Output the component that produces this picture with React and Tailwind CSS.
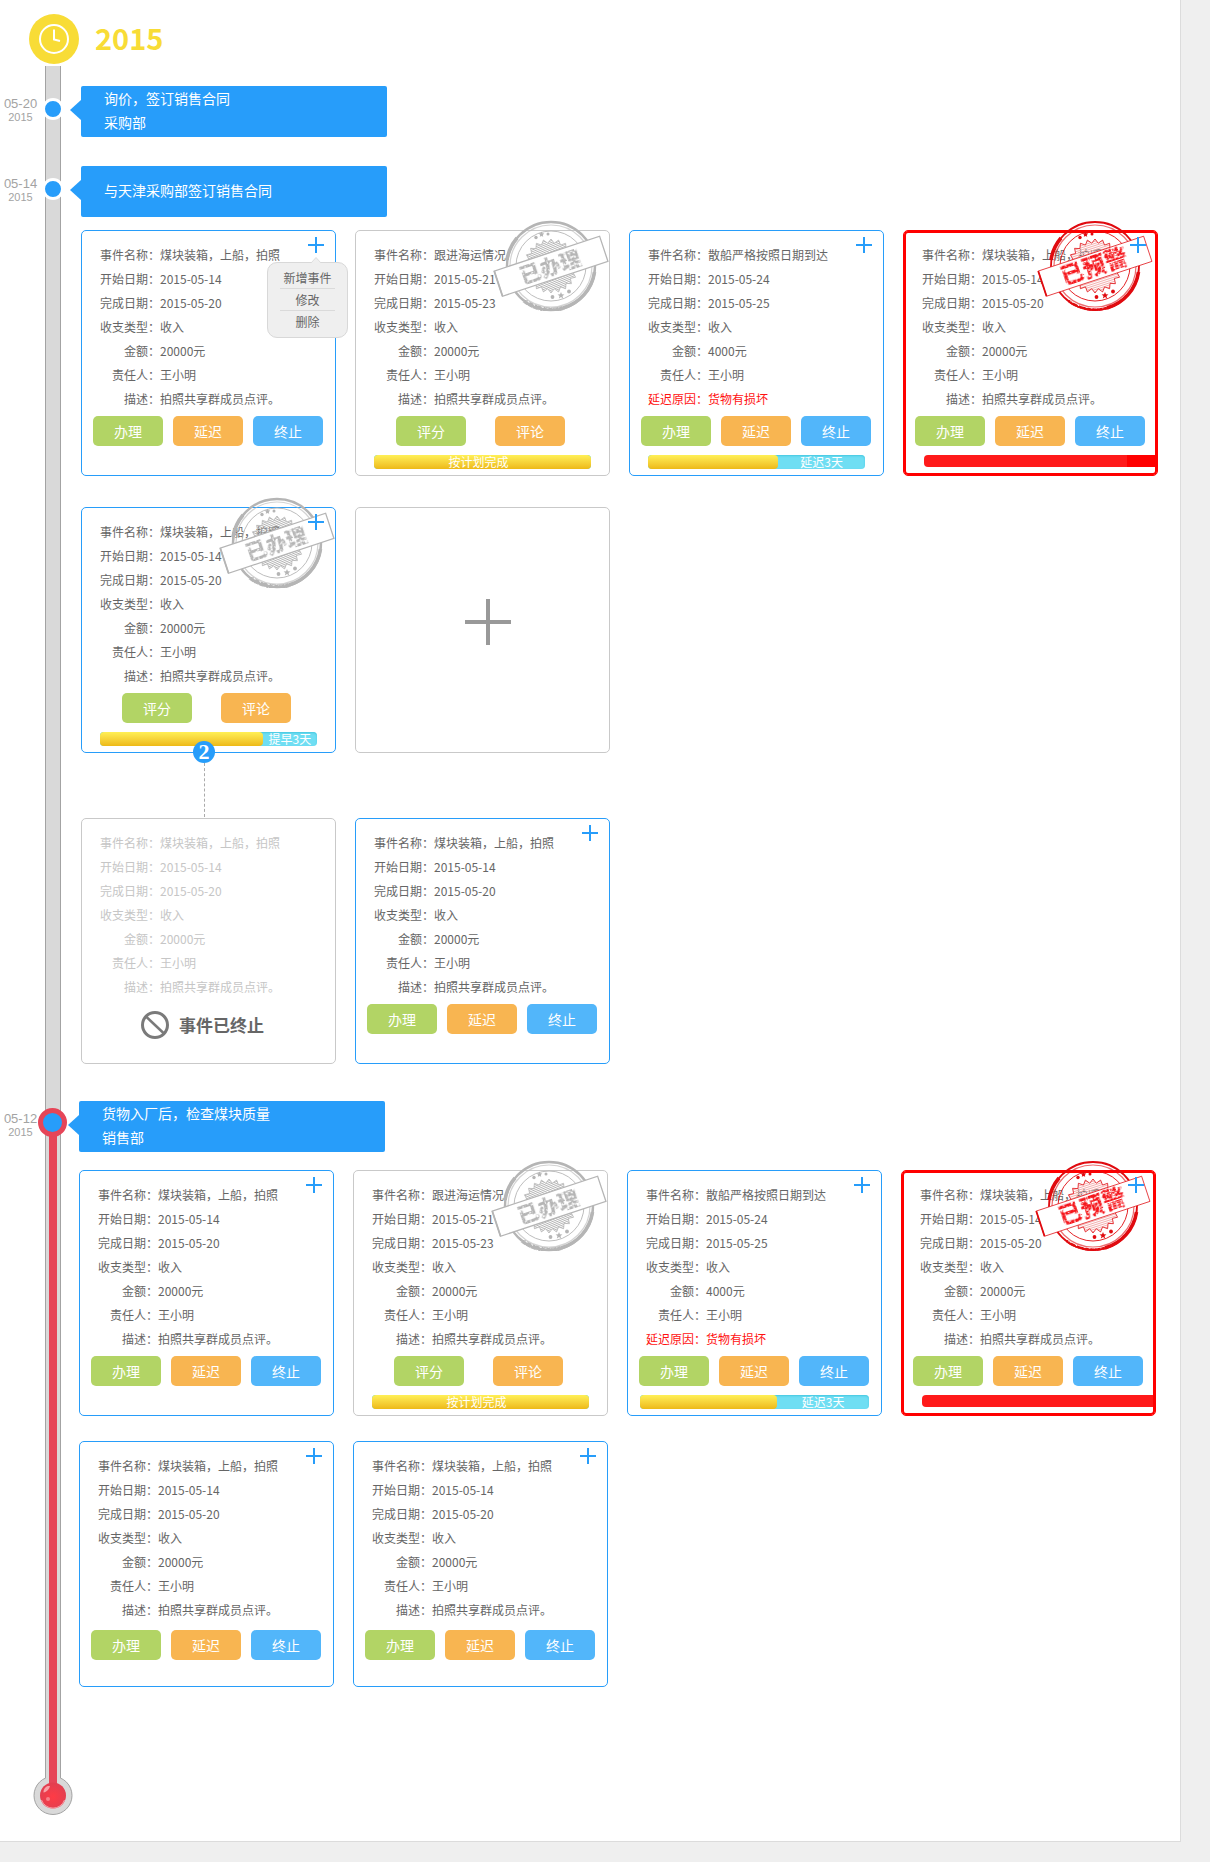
import React from "react";

const BASE = {
  name: "煤块装箱，上船，拍照",
  start: "2015-05-14",
  end: "2015-05-20",
  type: "收入",
  amount: "20000元",
  owner: "王小明",
  desc: "拍照共享群成员点评。",
};
const SEA = { ...BASE, name: "跟进海运情况", start: "2015-05-21", end: "2015-05-23" };
const BULK = {
  ...BASE,
  name: "散船严格按照日期到达",
  start: "2015-05-24",
  end: "2015-05-25",
  amount: "4000元",
  delay: "货物有损坏",
};

function starPoints(cx, cy, outer, inner, count) {
  const pts = [];
  for (let i = 0; i < count * 2; i++) {
    const r = i % 2 ? inner : outer;
    const a = (Math.PI * i) / count - Math.PI / 2;
    pts.push(`${(cx + r * Math.cos(a)).toFixed(2)},${(cy + r * Math.sin(a)).toFixed(2)}`);
  }
  return pts.join(" ");
}

function SharedDefs() {
  return (
    <svg className="absolute h-0 w-0" aria-hidden="true">
      <defs>
        <filter id="worn" x="-5%" y="-5%" width="110%" height="110%">
          <feTurbulence type="fractalNoise" baseFrequency="0.4" numOctaves="2" seed="4" result="noise" />
          <feColorMatrix in="noise" type="matrix" values="0 0 0 0 0  0 0 0 0 0  0 0 0 0 0  0 0 0 -5 3.6" result="mask" />
          <feComposite in="SourceGraphic" in2="mask" operator="in" />
        </filter>
        <pattern id="hatch-gray" width="2" height="2" patternUnits="userSpaceOnUse" patternTransform="rotate(25)">
          <rect width="2" height="1" fill="#b4b4b4" />
        </pattern>
        <pattern id="hatch-red" width="2" height="2" patternUnits="userSpaceOnUse" patternTransform="rotate(-18)">
          <rect width="2" height="1" fill="#f3b0b0" />
        </pattern>
      </defs>
    </svg>
  );
}

function Stamp({ text, red }) {
  const ink = red ? "#e00a0f" : "#b5b5b5";
  return (
    <svg
      className={`pointer-events-none absolute -top-3 h-[94px] w-[116px] ${red ? "right-1" : "right-0"}`}
      viewBox="-58 -47 116 94"
      role="img"
      aria-label={text}
    >
      <g fill="none" stroke={ink}>
        <circle r="44" strokeWidth={red ? 1.8 : 2.4} />
        <circle r="41" strokeWidth="1.2" opacity="0.6" />
        <circle r="35" strokeWidth="0.9" />
        <path d="M-44 -6 A44 44 0 0 1 -34 -28" strokeWidth="3.6" />
        <path d="M43.500 6 A44 44 0 0 1 12 42" strokeWidth="3.6" />
        <path d="M12 42 A44 44 0 0 1 -27 34.500" strokeWidth={red ? 2.6 : 4.4} filter="url(#worn)" />
      </g>
      <polygon
        points={starPoints(0, 0, 27, 23, 22)}
        fill={red ? "url(#hatch-red)" : "url(#hatch-gray)"}
        stroke={ink}
        strokeWidth="0.8"
      />
      <g fill={ink}>
        <circle cx="-15" cy="-28.5" r="1.7" />
        <polygon points={starPoints(-9.5, -31.5, 2.9, 1.4, 5)} />
        <circle cx="-3" cy="-32" r="1.5" />
        <circle cx="1.5" cy="31" r="1.9" />
        <polygon points={starPoints(10, 29.5, 3.6, 1.6, 5)} />
        <circle cx="18" cy="25.5" r="1.9" />
      </g>
      <g transform="rotate(-18.3)">
        <rect x="-55.5" y="-13" width="111" height="26.5" fill="#fff" stroke={ink} strokeWidth={red ? 0.7 : 1.3} />
        <path d="M-55.5 -13 V13.5" stroke={ink} strokeWidth="1.8" />
        <text
          x="-1"
          y="8"
          textAnchor="middle"
          fontSize={red ? 23 : 21}
          fontWeight="900"
          fill={red ? "#f5161b" : "#b5b5b5"}
          filter="url(#worn)"
        >
          {text}
        </text>
      </g>
    </svg>
  );
}

function AddButton() {
  return (
    <button type="button" aria-label="新增" className="absolute right-[11px] top-1.5 z-10 h-4 w-4">
      <svg viewBox="0 0 16 16" className="h-4 w-4">
        <path d="M8 0v16M0 8h16" stroke="#279dfa" strokeWidth="2" />
      </svg>
    </button>
  );
}

function Menu() {
  const items = ["新增事件", "修改", "删除"];
  return (
    <div className="absolute left-[185px] top-[31px] z-20 w-[81px] rounded-[10px] border border-[#d8d8d8] bg-[#efefef] px-3 py-1">
      <svg viewBox="0 0 10 7" className="absolute -top-[6px] left-[43px] h-[7px] w-[10px]">
        <path d="M0 6.5 L5 0.5 L10 6.5 V7 H0Z" fill="#efefef" />
        <path d="M0 6 L5 0.5 L10 6" fill="none" stroke="#dcdcdc" />
      </svg>
      {items.map((t, i) => (
        <button
          key={t}
          type="button"
          className={`block h-[22px] w-full whitespace-nowrap text-center text-xs text-[#666] ${
            i < 2 ? "border-b border-[#dadada]" : ""
          }`}
        >
          {t}
        </button>
      ))}
    </div>
  );
}

function Actions({ kind, low }) {
  const btn = "h-[30px] w-[70px] rounded-[5px] text-sm text-white";
  if (kind === "score") {
    return (
      <div className="mt-[5px] flex gap-[29px] pl-[40px]">
        <button type="button" className={`${btn} bg-[#b2d465]`}>评分</button>
        <button type="button" className={`${btn} bg-[#f8b551]`}>评论</button>
      </div>
    );
  }
  return (
    <div className={`flex gap-2.5 pl-[11px] ${low ? "mt-2" : "mt-[5px]"}`}>
      <button type="button" className={`${btn} bg-[#b2d465]`}>办理</button>
      <button type="button" className={`${btn} bg-[#f8b551]`}>延迟</button>
      <button type="button" className={`${btn} bg-[#52b6fa]`}>终止</button>
    </div>
  );
}

function Progress({ bar }) {
  if (bar.alert) {
    return (
      <div role="progressbar" aria-label="进度" className="ml-5 mr-0.5 mt-[9px] flex h-3 overflow-hidden rounded-l-[4px] bg-[#ff1a1a]">
        {bar.over && <span className="ml-auto h-full w-7 bg-[#ff0000]" />}
      </div>
    );
  }
  const full = bar.value === 100;
  return (
    <div
      role="progressbar"
      aria-label="进度"
      aria-valuenow={bar.value}
      className={`mt-[9px] flex h-3.5 rounded-[4px] bg-[#6fdef3] text-xs leading-[14px] text-white shadow-[inset_0_1px_2px_#45c8e0] ${
        bar.wide ? "mx-3" : "mx-[18px]"
      }`}
    >
      <span
        className="h-full rounded-[4px] bg-linear-to-b from-[#fff055] to-[#edb914] pr-2 text-center"
        style={{ width: `${bar.value}%` }}
      >
        {full ? bar.text : ""}
      </span>
      {!full && <span className="flex-1 text-center">{bar.text}</span>}
    </div>
  );
}

function Card({ data, tone = "blue", add = true, stamp, kind = "handle", bar, menu, ended, branch, low }) {
  const tones = {
    blue: "border-[#279dfa]",
    gray: "border-[#c9c9c9]",
    red: "border-[#ff0000] ring-2 ring-inset ring-[#ff0000]",
  };
  const rows = [
    ["事件名称", data.name],
    ["开始日期", data.start],
    ["完成日期", data.end],
    ["收支类型", data.type],
    ["金额", data.amount],
    ["责任人", data.owner],
    data.delay ? ["延迟原因", data.delay] : ["描述", data.desc],
  ];
  return (
    <article className={`relative min-h-[246px] w-[255px] rounded-[5px] border bg-white pt-3 ${tones[tone]}`}>
      <dl className={`pl-[18px] text-xs leading-6 ${ended ? "text-[#c6c6c6]" : "text-[#666]"}`}>
        {rows.map(([k, v]) => (
          <div key={k} className={`flex whitespace-nowrap ${k === "延迟原因" ? "text-[#ff1111]" : ""}`}>
            <dt className="w-[60px] shrink-0 text-right">{k}：</dt>
            <dd>{v}</dd>
          </div>
        ))}
      </dl>
      {stamp && <Stamp text={stamp} red={tone === "red"} />}
      {add && <AddButton />}
      {menu && <Menu />}
      {ended ? (
        <p className="mt-3 flex items-center gap-2.5 pl-[59px] text-[17px] font-bold leading-7 text-[#666]">
          <svg viewBox="0 0 28 28" className="h-7 w-7" fill="none" stroke="#7a7a7a" strokeWidth="3">
            <circle cx="14" cy="14" r="12.5" />
            <path d="M5 5.5 L23 22.5" strokeWidth="2.5" />
          </svg>
          事件已终止
        </p>
      ) : (
        <Actions kind={kind} low={low} />
      )}
      {bar && <Progress bar={bar} />}
      {branch && (
        <div className="absolute -bottom-[65px] left-[111px] flex h-[76px] w-[22px] flex-col items-center">
          <span className="flex h-[22px] w-[22px] shrink-0 items-center justify-center rounded-full bg-[#279dfa] font-['Liberation_Serif',serif] text-[22px] font-bold leading-none text-white">
            {branch}
          </span>
          <span className="w-0 flex-1 border-l border-dashed border-[#aaa]" />
        </div>
      )}
    </article>
  );
}

function EmptyCard() {
  return (
    <button
      type="button"
      aria-label="新增事件"
      className="flex min-h-[246px] w-[255px] items-center justify-center rounded-[5px] border border-[#c9c9c9] bg-white pb-4 pl-2.5"
    >
      <svg viewBox="0 0 46 46" className="h-[46px] w-[46px]">
        <path d="M23 0v46M0 23h46" stroke="#999" strokeWidth="4" />
      </svg>
    </button>
  );
}

function Banner({ lines }) {
  return (
    <header className="relative flex min-h-[51px] w-[306px] flex-col justify-center rounded-[2px] bg-[#279dfa] pb-[3px] pl-[23px] text-sm leading-6 text-white">
      <svg viewBox="0 0 11 20" className="absolute -left-[11px] top-3.5 h-5 w-[11px]">
        <path d="M11 0 V20 L0 10Z" fill="#279dfa" />
      </svg>
      {lines.map((l) => (
        <p key={l}>{l}</p>
      ))}
    </header>
  );
}

function Section({ day, year, lines, active, pad, end, children }) {
  return (
    <section className="flex">
      <time className="w-[45px] shrink-0 pr-1 pt-[30px] text-center font-['Liberation_Sans',sans-serif] text-[#a3a3a3]">
        <span className="block text-[13px] leading-[15px]">{day}</span>
        <span className="block text-[11px] leading-3">{year}</span>
      </time>
      <div className="relative w-4 shrink-0 border-x border-[#a3a3a3] bg-[#d9d9d9]">
        {active ? (
          <>
            <span className="absolute bottom-0 left-[3px] top-[42px] w-2 bg-[#e64558]" />
            <span className="absolute -left-2 top-[27px] h-[29px] w-[29px] rounded-full border-[5px] border-[#e64558] bg-[#279dfa]" />
          </>
        ) : (
          <span className="absolute -left-1 top-8 h-[22px] w-[22px] rounded-full border-[3px] border-white bg-[#279dfa]" />
        )}
      </div>
      <div className={`min-w-0 flex-1 pt-5 ${pad} ${end}`}>
        <Banner lines={lines} />
        {children}
      </div>
    </section>
  );
}

function Row({ top, children }) {
  return <div className={`flex flex-wrap gap-[19px] ${top}`}>{children}</div>;
}

export default function App() {
  return (
    <div className="min-h-screen bg-[#efefef] pb-[20px] pr-[29px] font-['Noto_Sans_CJK_SC',sans-serif]">
      <SharedDefs />
      <main className="border-b border-r border-[#dcdcdc] bg-white pb-[26px]">
        <div className="flex h-[66px] items-start gap-4 pl-[29px] pt-3.5">
          <svg viewBox="0 0 50 50" className="h-[50px] w-[50px]" aria-hidden="true">
            <circle cx="25" cy="25" r="25" fill="#f8dc36" />
            <circle cx="25" cy="25" r="14" fill="none" stroke="#fff" strokeWidth="2" />
            <path d="M25 15.5 V25.5 L31 27" fill="none" stroke="#fff" strokeWidth="2" />
          </svg>
          <h1 className="text-[29px] font-bold leading-[46px] text-[#f8dc36]">2015</h1>
        </div>

        <Section day="05-20" year="2015" lines={["询价，签订销售合同", "采购部"]} pad="pl-5" end="pb-[9px]" />

        <Section day="05-14" year="2015" lines={["与天津采购部签订销售合同"]} pad="pl-5" end="pb-[17px]">
          <Row top="mt-[13px]">
            <Card data={BASE} menu />
            <Card data={SEA} tone="gray" add={false} stamp="已办理" kind="score" bar={{ value: 100, text: "按计划完成" }} />
            <Card data={BULK} bar={{ value: 60, text: "延迟3天" }} />
            <Card data={BASE} tone="red" stamp="已预警" bar={{ alert: true, over: true }} />
          </Row>
          <Row top="mt-[31px]">
            <Card data={BASE} stamp="已办理" kind="score" bar={{ value: 75, text: "提早3天" }} branch="2" />
            <EmptyCard />
          </Row>
          <Row top="mt-[65px]">
            <Card data={BASE} tone="gray" add={false} ended />
            <Card data={BASE} />
          </Row>
        </Section>

        <Section active day="05-12" year="2015" lines={["货物入厂后，检查煤块质量", "销售部"]} pad="pl-[18px]" end="pb-[91px]">
          <Row top="mt-[18px]">
            <Card data={BASE} />
            <Card data={SEA} tone="gray" add={false} stamp="已办理" kind="score" bar={{ value: 100, text: "按计划完成" }} />
            <Card data={BULK} bar={{ value: 60, text: "延迟3天", wide: true }} />
            <Card data={BASE} tone="red" stamp="已预警" bar={{ alert: true }} />
          </Row>
          <Row top="mt-[25px]">
            <Card data={BASE} low />
            <Card data={BASE} low />
          </Row>
        </Section>

        <svg viewBox="0 0 40 40" className="relative -mt-[3px] ml-[33px] h-10 w-10" aria-hidden="true">
          <defs>
            <radialGradient id="bulb" cx="0.5" cy="0.55" r="0.5">
              <stop offset="0" stopColor="#ff3b45" />
              <stop offset="1" stopColor="#e33f50" />
            </radialGradient>
          </defs>
          <circle cx="20" cy="20.5" r="19" fill="#d9d9d9" stroke="#a3a3a3" />
          <path d="M13 0h14v6H13z" fill="#d9d9d9" />
          <path d="M16 0h8v12h-8z" fill="#e64558" />
          <circle cx="20" cy="20.5" r="13" fill="url(#bulb)" />
          <path d="M8.5 25 A12.2 12.2 0 0 0 31.500 25" fill="none" stroke="#f7a3aa" strokeWidth="1" />
          <path d="M10.500 16.500 C11 12.500 14 10.500 17 11 C16.500 14 13.500 17 10.500 17.500Z" fill="#f9a0a6" />
          <circle cx="15" cy="24" r="2" fill="#f77f88" />
        </svg>
      </main>
    </div>
  );
}
